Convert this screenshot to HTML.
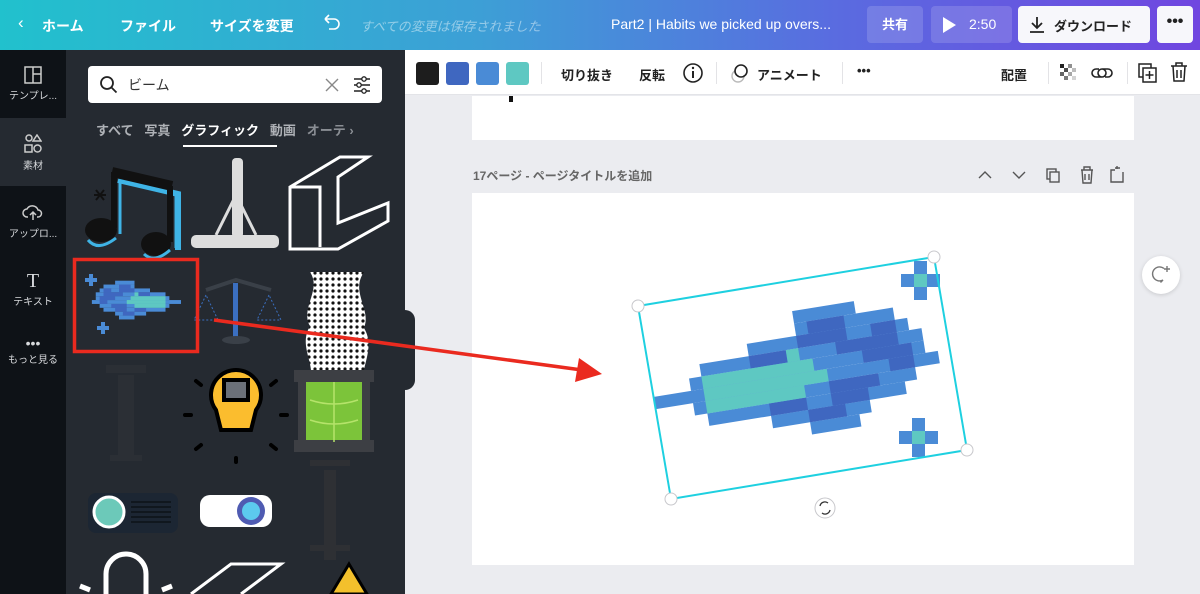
<!DOCTYPE html>
<html><head><meta charset="utf-8"><style>
*{margin:0;padding:0;box-sizing:border-box}
body{width:1200px;height:594px;overflow:hidden;font-family:"Liberation Sans","Noto Sans CJK JP",sans-serif;background:#ebecf0;position:relative}
.abs{position:absolute}
.top{left:0;top:0;width:1200px;height:50px;background:linear-gradient(90deg,#21c1cd 0%,#3d9fd6 40%,#5a6be0 70%,#7046e0 100%);color:#fff;font-size:14px;font-weight:bold}
.top span{position:absolute;top:16px}
.rail{left:0;top:50px;width:66px;height:544px;background:#0e1217}
.panel{left:66px;top:50px;width:339px;height:544px;background:#252a31}
.ri{position:absolute;left:0;width:66px;text-align:center;color:#d8dadd;font-size:10px}
.tb{left:405px;top:50px;width:795px;height:45px;background:#fff;border-bottom:1px solid #e3e4e8;font-size:13px;font-weight:bold;color:#222}
.tb span{position:absolute;top:15px}
.sw{position:absolute;top:12px;width:23px;height:23px;border-radius:3px}
.sep{position:absolute;top:12px;width:1px;height:22px;background:#e3e3e6}
</style></head><body>
<div class="abs top">
<span style="left:18px;font-weight:normal;font-size:17px;top:13px">‹</span>
<span style="left:42px">ホーム</span><span style="left:120px">ファイル</span><span style="left:210px">サイズを変更</span>
<svg class="abs" style="left:320px;top:14px" width="22" height="20" viewBox="0 0 22 20"><path d="M5 5h9a5 5 0 010 10H9M5 5l4-4M5 5l4 4" fill="none" stroke="#fff" stroke-width="1.6"/></svg>
<span style="left:360px;font-weight:normal;font-style:italic;color:rgba(255,255,255,.45);font-size:13px">すべての変更は保存されました</span>
<span style="left:611px;font-weight:normal;font-size:14px">Part2 | Habits we picked up overs...</span>
<div class="abs" style="left:867px;top:6px;width:56px;height:37px;background:rgba(255,255,255,.15);border-radius:4px;text-align:center;line-height:37px;font-size:13px">共有</div>
<div class="abs" style="left:931px;top:6px;width:81px;height:37px;background:rgba(255,255,255,.15);border-radius:4px"><svg class="abs" style="left:10px;top:10px" width="16" height="18"><path d="M2 1L15 9L2 17Z" fill="#fff"/></svg><span style="left:38px;top:10px;font-weight:normal">2:50</span></div>
<div class="abs" style="left:1018px;top:6px;width:132px;height:37px;background:#f7f7fb;border-radius:4px;color:#222"><svg class="abs" style="left:10px;top:9px" width="18" height="20"><path d="M9 2v11M4 8l5 5 5-5M2 17h14" fill="none" stroke="#222" stroke-width="1.8"/></svg><span style="left:36px;top:10px;font-size:13px">ダウンロード</span></div>
<div class="abs" style="left:1157px;top:6px;width:36px;height:37px;background:#f7f7fb;border-radius:4px;color:#222;text-align:center;line-height:32px;font-size:16px">•••</div>
</div>
<div class="abs rail">
<div class="abs" style="left:0;top:68px;width:66px;height:68px;background:#252a31"></div>
<div class="ri" style="top:16px"><svg width="18" height="18"><rect x="1" y="1" width="16" height="16" fill="none" stroke="#ccc" stroke-width="1.5"/><path d="M9 1v16M9 8h8" stroke="#ccc" stroke-width="1.5"/></svg><br>テンプレ...</div>
<div class="ri" style="top:84px"><svg width="18" height="20"><circle cx="5" cy="4" r="3" fill="none" stroke="#ccc" stroke-width="1.5"/><path d="M13 1l4 6h-8z" fill="none" stroke="#ccc" stroke-width="1.5"/><rect x="1" y="11" width="7" height="7" fill="none" stroke="#ccc" stroke-width="1.5"/><circle cx="13.5" cy="14.5" r="3.5" fill="none" stroke="#ccc" stroke-width="1.5"/></svg><br>素材</div>
<div class="ri" style="top:152px"><svg width="22" height="20"><path d="M6 15H5a4 4 0 010-8 6 6 0 0111 1 3.5 3.5 0 010 7h-1M11 18V10M8 13l3-3 3 3" fill="none" stroke="#ccc" stroke-width="1.5"/></svg><br>アップロ...</div>
<div class="ri" style="top:220px"><span style="font-size:20px;font-family:'Liberation Serif',serif">T</span><br>テキスト</div>
<div class="ri" style="top:285px"><span style="font-size:14px">•••</span><br>もっと見る</div>
</div>
<div class="abs panel">
<div class="abs" style="left:22px;top:16px;width:294px;height:37px;background:#fff;border-radius:4px">
<svg class="abs" style="left:11px;top:9px" width="20" height="20"><circle cx="8" cy="8" r="6" fill="none" stroke="#222" stroke-width="1.8"/><path d="M12.5 12.5l5 5" stroke="#222" stroke-width="1.8"/></svg>
<span class="abs" style="left:40px;top:9px;font-size:14px;color:#333">ビーム</span>
<svg class="abs" style="left:236px;top:11px" width="16" height="16"><path d="M2 2l12 12M14 2L2 14" stroke="#888" stroke-width="1.4"/></svg>
<svg class="abs" style="left:264px;top:9px" width="20" height="20"><path d="M2 4h16M2 10h16M2 16h16" stroke="#222" stroke-width="1.5"/><circle cx="12" cy="4" r="2.2" fill="#fff" stroke="#222" stroke-width="1.3"/><circle cx="7" cy="10" r="2.2" fill="#fff" stroke="#222" stroke-width="1.3"/><circle cx="12" cy="16" r="2.2" fill="#fff" stroke="#222" stroke-width="1.3"/></svg>
</div>
<div class="abs" style="left:30px;top:70px;font-size:13px;white-space:nowrap;font-weight:bold"><span style="color:#aeb1b6">すべて</span>&nbsp;&nbsp; <span style="color:#aeb1b6">写真</span>&nbsp;&nbsp; <span style="color:#fff">グラフィック</span>&nbsp;&nbsp; <span style="color:#aeb1b6">動画</span>&nbsp;&nbsp; <span style="color:#8a8e94">オーテ ›</span></div>
<div class="abs" style="left:117px;top:95px;width:94px;height:2px;background:#fff"></div>
</div>
<!-- thumbnails -->
<svg class="abs" style="left:66px;top:150px" width="339" height="444">
<defs><pattern id="dots" width="6" height="6" patternUnits="userSpaceOnUse"><rect width="6" height="6" fill="#fff"/><circle cx="3" cy="3" r="1.6" fill="#111"/></pattern></defs>
<!-- music note -->
<path d="M52 30L112 44V100" stroke="#3fb4e6" stroke-width="6" fill="none"/>
<path d="M46 22L106 36" stroke="#111" stroke-width="10"/>
<path d="M48 22V78M104 36V92" stroke="#111" stroke-width="6"/>
<path d="M54 30V84M110 44V98" stroke="#3fb4e6" stroke-width="3"/>
<ellipse cx="35" cy="80" rx="16" ry="12" fill="#111"/><ellipse cx="90" cy="94" rx="15" ry="12" fill="#111"/>
<path d="M22 90q10 12 28-2M78 104q10 10 26-4" stroke="#3fb4e6" stroke-width="3" fill="none"/>
<path d="M30 40l8 10M38 40l-8 10M28 45h12" stroke="#111" stroke-width="2"/>
<!-- stand -->
<rect x="166" y="8" width="11" height="80" fill="#ddd" rx="4"/><path d="M150 85l20-40 20 40" stroke="#ddd" stroke-width="3" fill="none"/><rect x="125" y="85" width="88" height="13" rx="5" fill="#ddd"/>
<!-- L beam -->
<path d="M224 37l50-30h28l-30 20v46l50-20v18l-50 28h-48z M224 37h30v60" fill="none" stroke="#fff" stroke-width="3"/>
<!-- scale -->
<path d="M140 140l30-10 35 10" stroke="#3a4048" stroke-width="4" fill="none"/><rect x="167" y="133" width="5" height="55" fill="#3b6fc0"/><ellipse cx="170" cy="190" rx="14" ry="4" fill="#3a4048"/><path d="M140 145l-12 25h24zM203 145l-12 25h24z" stroke="#3b6fc0" stroke-dasharray="2 2" fill="none"/>
<!-- dotted -->
<path d="M244 122h54c-14 20 8 38 0 56 12 20-4 40 0 54h-54c6-18-12-36 0-56-10-18 12-36 0-54z" fill="url(#dots)"/>
<!-- tower -->
<rect x="52" y="225" width="16" height="85" fill="#2b2f35"/><rect x="40" y="215" width="40" height="8" fill="#2b2f35"/><rect x="44" y="305" width="32" height="6" fill="#2b2f35"/>
<!-- bulb -->
<path d="M150 260a25 25 0 1140 0l-5 20h-30z" fill="#fbbd2e" stroke="#000" stroke-width="4"/><rect x="158" y="230" width="24" height="20" fill="#6b7078" stroke="#000" stroke-width="4"/>
<g stroke="#000" stroke-width="4" stroke-linecap="round"><path d="M125 265h-6M215 265h6M135 235l-5-4M205 235l5-4M135 295l-5 4M205 295l5 4M170 308v4"/></g>
<!-- tube -->
<rect x="232" y="222" width="72" height="80" fill="#3d3f44"/><rect x="240" y="230" width="56" height="66" fill="#7cc43a"/><rect x="228" y="290" width="80" height="12" fill="#3d3f44"/><rect x="228" y="220" width="80" height="12" fill="#3d3f44"/>
<path d="M244 250q24 8 48 0M244 270q24 8 48 0M268 232v60" stroke="#b5e36a" stroke-width="1.5" fill="none"/>
<!-- projector -->
<rect x="22" y="343" width="90" height="40" rx="8" fill="#1c2633"/><circle cx="43" cy="362" r="15" fill="#6cc9b9" stroke="#fff" stroke-width="3"/>
<g stroke="#0d1218" stroke-width="1.5"><path d="M65 352h40M65 357h40M65 362h40M65 367h40M65 372h40"/></g>
<rect x="134" y="345" width="72" height="32" rx="10" fill="#fff"/><circle cx="185" cy="361" r="14" fill="#4f5bb2"/><circle cx="185" cy="361" r="9" fill="#5ccaee"/>
<rect x="258" y="320" width="12" height="90" fill="#2e3034"/><rect x="244" y="310" width="40" height="6" fill="#2e3034"/><rect x="244" y="395" width="40" height="6" fill="#2e3034"/>
<path d="M40 444v-20a20 20 0 0140 0v20M24 440l-10-4M96 440l10-4" stroke="#fff" stroke-width="5" fill="none"/><path d="M125 444l40-30h50l-40 30" stroke="#fff" stroke-width="3" fill="none"/><path d="M265 444l18-30 18 30z" fill="#f3c02c" stroke="#000" stroke-width="3"/>
</svg>
<!-- thumbnail beam -->
<svg class="abs" style="left:0;top:0" width="405" height="594">
<g transform="translate(181,302) scale(-0.31,0.31)"><use href="#beam"/></g>
<rect x="89" y="274" width="4" height="12" fill="#4a8bd6"/><rect x="85" y="278" width="12" height="4" fill="#4a8bd6"/>
<rect x="101" y="322" width="4" height="12" fill="#4a8bd6"/><rect x="97" y="326" width="12" height="4" fill="#4a8bd6"/>
<rect x="74.5" y="259.5" width="123" height="92" fill="none" stroke="#ea2a1f" stroke-width="3.5"/>
</svg>
<div class="abs" style="left:405px;top:310px;width:10px;height:80px;background:#252a31;border-radius:0 10px 10px 0"></div>
<!-- toolbar -->
<div class="abs tb">
<div class="sw" style="left:11px;background:#1d1d1d"></div><div class="sw" style="left:41px;background:#3f67c0"></div><div class="sw" style="left:71px;background:#4a8bd6"></div><div class="sw" style="left:101px;background:#5ec8c2"></div>
<div class="sep" style="left:136px"></div>
<span style="left:156px">切り抜き</span><span style="left:234px">反転</span>
<svg class="abs" style="left:277px;top:12px" width="22" height="22"><circle cx="11" cy="11" r="9" fill="none" stroke="#222" stroke-width="1.6"/><path d="M11 9v7" stroke="#222" stroke-width="2"/><circle cx="11" cy="6" r="1.2" fill="#222"/></svg>
<div class="sep" style="left:311px"></div>
<svg class="abs" style="left:323px;top:12px" width="22" height="22"><circle cx="10" cy="14" r="6" fill="none" stroke="#bbb" stroke-width="1.4"/><circle cx="13" cy="9" r="6" fill="#fff" stroke="#222" stroke-width="1.6"/></svg>
<span style="left:352px">アニメート</span>
<div class="sep" style="left:437px"></div>
<span style="left:452px;top:13px">•••</span>
<span style="left:596px">配置</span>
<div class="sep" style="left:643px"></div>
<svg class="abs" style="left:655px;top:14px" width="18" height="18"><g fill="#222"><rect x="0" y="0" width="4" height="4"/><rect x="8" y="0" width="4" height="4" opacity=".5"/><rect x="4" y="4" width="4" height="4" opacity=".8"/><rect x="12" y="4" width="4" height="4" opacity=".3"/><rect x="0" y="8" width="4" height="4" opacity=".7"/><rect x="8" y="8" width="4" height="4" opacity=".4"/><rect x="4" y="12" width="4" height="4" opacity=".6"/><rect x="12" y="12" width="4" height="4" opacity=".2"/></g></svg>
<svg class="abs" style="left:686px;top:14px" width="22" height="18"><path d="M8 5h-3a4 4 0 000 8h6a4 4 0 000-8M14 13h3a4 4 0 000-8h-6a4 4 0 000 8" fill="none" stroke="#222" stroke-width="1.6"/></svg>
<div class="sep" style="left:722px"></div>
<svg class="abs" style="left:733px;top:13px" width="20" height="20"><rect x="1" y="1" width="12" height="13" fill="none" stroke="#222" stroke-width="1.5"/><rect x="5" y="5" width="13" height="14" fill="#fff" stroke="#222" stroke-width="1.5"/><path d="M11.5 8v8M7.5 12h8" stroke="#222" stroke-width="1.5"/></svg>
<svg class="abs" style="left:765px;top:12px" width="18" height="20"><path d="M1 4h16M6 4V1h6v3M3 4l1 15h10l1-15M7 8v8M11 8v8" fill="none" stroke="#222" stroke-width="1.5"/></svg>
</div>
<!-- pages -->
<div class="abs" style="left:472px;top:96px;width:662px;height:44px;background:#fff"></div>
<div class="abs" style="left:509px;top:96px;width:4px;height:6px;background:#111"></div>
<div class="abs" style="left:473px;top:167px;font-size:12px;color:#666;font-weight:bold">17ページ - ページタイトルを追加</div>
<svg class="abs" style="left:975px;top:164px" width="160" height="22"><g fill="none" stroke="#555" stroke-width="1.4"><path d="M4 14l6-6 6 6M38 8l6 6 6-6"/><rect x="72" y="5" width="9" height="10"/><rect x="75" y="8" width="9" height="10" fill="#ebecf0"/><path d="M106 6h12M109 6V3h6v3M107 6l1 13h8l1-13M110 10v6M114 10v6M142 5v-3M140 4h5M148 8v10h-12V6h4"/></g></svg>
<div class="abs" style="left:472px;top:193px;width:662px;height:372px;background:#fff"></div>
<div class="abs" style="left:1142px;top:256px;width:38px;height:38px;border-radius:50%;background:#fff;box-shadow:0 1px 4px rgba(0,0,0,.15)"><svg class="abs" style="left:9px;top:9px" width="22" height="20"><path d="M13 3.5a7 7 0 10-1 11.5l-2.5 2.5" fill="none" stroke="#777" stroke-width="1.4"/><path d="M16 1v6M13 4h6" stroke="#777" stroke-width="1.4"/></svg></div>
<!-- main svg -->
<svg class="abs" style="left:0;top:0" width="1200" height="594">
<defs>
<g id="beam">
<g fill="#4a8bd6">
<rect x="150" y="-68.75" width="62.5" height="12.5"/>
<rect x="150" y="-56.25" width="100" height="12.5"/>
<rect x="100" y="-43.75" width="162.5" height="12.5"/>
<rect x="50" y="-31.25" width="225" height="12.5"/>
<rect x="37.5" y="-18.75" width="237.5" height="12.5"/>
<rect x="0" y="-6.25" width="287.5" height="12.5"/>
<rect x="37.5" y="6.25" width="225" height="12.5"/>
<rect x="50" y="18.75" width="200" height="12.5"/>
<rect x="112.5" y="31.25" width="100" height="12.5"/>
<rect x="150" y="43.75" width="50" height="12.5"/>
</g>
<g fill="#3f67c0">
<rect x="162.5" y="-56.25" width="37.5" height="12.5"/>
<rect x="150" y="-43.75" width="50" height="12.5"/>
<rect x="225" y="-43.75" width="25" height="12.5"/>
<rect x="100" y="-31.25" width="37.5" height="12.5"/>
<rect x="187.5" y="-31.25" width="62.5" height="12.5"/>
<rect x="212.5" y="-18.75" width="50" height="12.5"/>
<rect x="237.5" y="-6.25" width="25" height="12.5"/>
<rect x="175" y="6.25" width="50" height="12.5"/>
<rect x="112.5" y="18.75" width="37.5" height="12.5"/>
<rect x="175" y="18.75" width="37.5" height="12.5"/>
<rect x="150" y="31.25" width="37.5" height="12.5"/>
</g>
<g fill="#5ec8c2">
<rect x="137.5" y="-31.25" width="12.5" height="12.5"/>
<rect x="50" y="-18.75" width="112.5" height="12.5"/>
<rect x="50" y="-6.25" width="125" height="12.5"/>
<rect x="50" y="6.25" width="100" height="12.5"/>
</g>
</g>
</defs>
<g transform="translate(655,403) rotate(-9.2)"><use href="#beam"/></g>
<g fill="#4a8bd6"><rect x="914" y="261" width="13" height="39"/><rect x="901" y="274" width="39" height="13"/><rect x="912" y="418" width="13" height="39"/><rect x="899" y="431" width="39" height="13"/></g>
<g fill="#5ec8c2"><rect x="914" y="274" width="13" height="13"/><rect x="912" y="431" width="13" height="13"/></g>
<path d="M638 306L934 257L967 450L671 499Z" fill="none" stroke="#1ed0e0" stroke-width="2"/>
<g fill="#fff" stroke="#c8c8cc" stroke-width="1"><circle cx="638" cy="306" r="6"/><circle cx="934" cy="257" r="6"/><circle cx="967" cy="450" r="6"/><circle cx="671" cy="499" r="6"/><circle cx="825" cy="508" r="10"/></g>
<path d="M820 506a5 5 0 018-3M830 510a5 5 0 01-8 3" fill="none" stroke="#333" stroke-width="1.3"/>
<path d="M214 320L582 370" stroke="#ea2a1f" stroke-width="3.5"/>
<path d="M602 374L575 382L579 358Z" fill="#ea2a1f"/>
</svg>
</body></html>
